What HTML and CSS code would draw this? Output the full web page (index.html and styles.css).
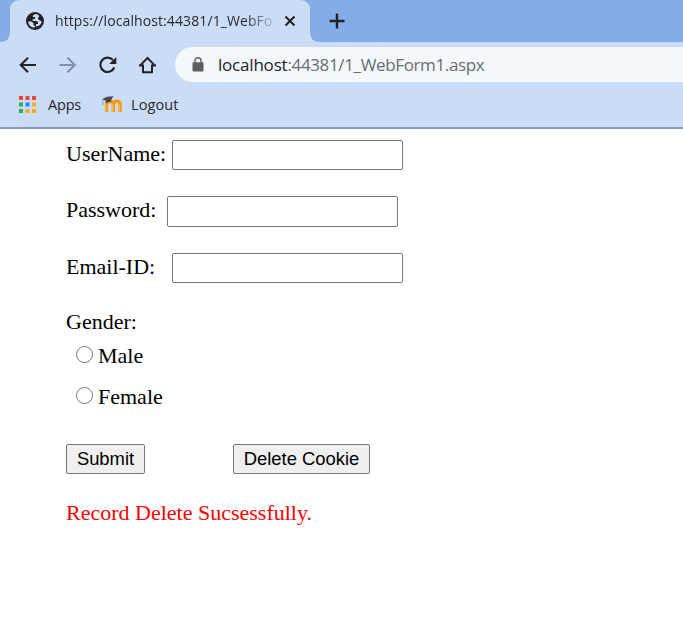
FILE: index.html
```html
<!DOCTYPE html>
<html lang="en">
<head>
<meta charset="utf-8">
<title>WebForm1</title>
<link rel="stylesheet" href="styles.css">
</head>
<body>
<header class="browser">
  <div class="tabstrip">
    <svg class="curve" width="10" height="42" viewBox="0 0 10 42"><path d="M10 32V42H0Q10 42 10 32Z" fill="#cbdcf6"/></svg>
    <div class="tab">
      <svg class="globe" width="18" height="18" viewBox="0 0 18 18"><circle cx="9" cy="9" r="9" fill="#202226"/><path d="M10.2 2.1C8 2.2 6.6 3.6 6.8 5H9V6.8L6.6 7.5V9H10.8L12 10.3V12H10V14.2L8 15.8A7 7 0 0 1 2.1 9.5H5.5L7.5 11.2V13L9.5 14.5 13 13.8A7 7 0 0 0 15.8 9.2L13.6 8.4 11.8 6.6 13.3 4A7 7 0 0 0 10.2 2.1Z" fill="#cbdcf6"/></svg>
      <span class="tab-title">https://localhost:44381/1_WebFo</span>
      <svg class="close" width="12" height="12" viewBox="0 0 12 12"><path d="M1.5 1.5L10.5 10.5M10.5 1.5L1.5 10.5" stroke="#202226" stroke-width="2"/></svg>
    </div>
    <svg class="curve" width="10" height="42" viewBox="0 0 10 42"><path d="M0 32V42H10Q0 42 0 32Z" fill="#cbdcf6"/></svg>
    <svg class="plus" width="16" height="16" viewBox="0 0 16 16"><path d="M8 .5V15.5M.5 8H15.5" stroke="#202226" stroke-width="2.4"/></svg>
  </div>
  <div class="toolbar">
    <svg class="nav" width="18" height="18" viewBox="0 0 18 18"><path d="M17 9H2M9 1.7L1.7 9 9 16.3" fill="none" stroke="#202226" stroke-width="2"/></svg>
    <svg class="nav" width="18" height="18" viewBox="0 0 18 18"><path d="M.5 9H15.5M8.5 1.7L15.8 9 8.5 16.3" fill="none" stroke="#8490a7" stroke-width="2"/></svg>
    <svg class="nav" width="18" height="18" viewBox="0 0 18 18"><path d="M15.3 11.5A7.2 7.2 0 1 1 14 4" fill="none" stroke="#202226" stroke-width="2.1"/><path d="M17.3 1V8H10.2Z" fill="#202226"/></svg>
    <svg class="nav" width="18" height="18" viewBox="0 0 18 18"><path d="M0 9.6H4V16.2H13V9.6H17M1 9.6L8.5 2 16 9.6" fill="none" stroke="#202226" stroke-width="2"/></svg>
    <div class="address">
      <svg class="lock" width="12" height="15" viewBox="0 0 12 15"><rect x=".5" y="5.2" width="11" height="9.3" rx="1.2" fill="#5b5e63"/><path d="M3 6V3.7a3 3 0 0 1 6 0V6" fill="none" stroke="#5b5e63" stroke-width="1.4"/></svg>
      <span class="host">localhost</span><span class="path">:44381/1_WebForm1.aspx</span>
    </div>
  </div>
  <div class="bookmarks">
    <div class="apps">
      <svg width="17" height="17" viewBox="0 0 17 17"><path d="M0 0h4v4H0zM6.5 0h4v4h-4zM13 0h4v4h-4z" fill="#f04438"/><path d="M0 6.5h4v4H0zM0 13h4v4H0z" fill="#31a85a"/><path d="M6.5 6.5h4v4h-4z" fill="#2489f4"/><path d="M13 6.5h4v4h-4zM6.5 13h4v4h-4zM13 13h4v4h-4z" fill="#f7ad13"/></svg>
      <span class="apps-label">Apps</span>
    </div>
    <svg class="moodle" width="20" height="17" viewBox="0 0 20 17"><path d="M4.5 16V8.5Q4.5 5.2 7.8 5.2T11.3 8.5V16M11.3 8.5Q11.3 5.2 14.8 5.2T18 8.5V16" fill="none" stroke="#f19b16" stroke-width="3.6"/><path d="M3.6 15.5V8.5M10.4 15.5V8.5M17.2 15.5V8.5" fill="none" stroke="#ffc55b" stroke-width="1"/><path d="M0 3.3L5 .8 11.5 .3 9.5 3.2 9 5.5 4 7 3.5 4.5Z" fill="#4a4b4e"/><path d="M.8 3.5V9" stroke="#858991" stroke-width=".8"/></svg>
    <span class="logout-label">Logout</span>
  </div>
</header>
<main class="page">
  <form>
    <div class="field"><label for="user">UserName:</label><input class="box" id="user" type="text"></div>
    <div class="field field-password"><label for="pass">Password:</label><input class="box" id="pass" type="password"></div>
    <div class="field"><label for="mail">Email-ID:</label><input class="box" id="mail" type="text"></div>
    <div class="legend">Gender:</div>
    <label class="option"><input class="radio" type="radio" name="gender"><span>Male</span></label>
    <label class="option"><input class="radio" type="radio" name="gender"><span>Female</span></label>
    <div class="actions"><button class="btn submit" type="button">Submit</button><button class="btn delete" type="button">Delete Cookie</button></div>
    <p class="message">Record Delete Sucsessfully.</p>
  </form>
</main>
</body>
</html>
```
FILE: styles.css
```css
* { box-sizing: border-box; }
body { margin: 0; background: #fff; color: #000; }
svg { display: block; flex: none; }
.browser { height: 129px; background: #cbdcf6; border-bottom: 2px solid #8c9bb0; font-family: "Open Sans", sans-serif; color: #26292e; }
.tabstrip { display: flex; height: 42px; background: #84ace9; }
.tab { display: flex; align-items: center; width: 300px; height: 42px; padding-left: 16px; background: #cbdcf6; border-radius: 9px 9px 0 0; }
.tab-title { width: 219px; margin-left: 11px; font-size: 14px; line-height: 20px; letter-spacing: .1px; white-space: nowrap; -webkit-mask-image: linear-gradient(90deg, #000 190px, transparent 224px); mask-image: linear-gradient(90deg, #000 190px, transparent 224px); }
.close { margin-left: 10px; }
.plus { margin: 13px 0 0 9px; }
.toolbar { display: flex; align-items: center; height: 45px; padding-left: 19px; }
.nav { margin-right: 22px; }
.nav:nth-of-type(4) { margin-right: 18px; }
.address { display: flex; align-items: center; flex: 1; height: 35px; padding-left: 17px; border-radius: 18px 0 0 18px; background: #f4f8fd; font-size: 17px; white-space: nowrap; }
.host { margin-left: 14px; color: #202226; letter-spacing: -.2px; }
.path { color: #686c72; letter-spacing: -.36px; }
.bookmarks { display: flex; align-items: center; height: 34px; font-size: 14.5px; }
.apps { display: flex; align-items: center; width: 79px; height: 34px; margin-left: 10px; padding-left: 9px; border-radius: 17px; background: #c9dbf5; }
.apps-label { margin-left: 12px; letter-spacing: -.2px; }
.moodle { margin-left: 13px; }
.logout-label { margin-left: 9px; letter-spacing: .1px; }
.page { padding: 11px 0 0 66px; font: 22px/25px "Liberation Serif", serif; }
.field { display: flex; height: 30px; margin-bottom: 26px; }
.field label { width: 106px; padding-top: 1px; }
.field-password { height: 31px; }
.field-password label { width: 101px; }
.box { width: 231px; height: 100%; margin: 0; border: 1px solid #767676; border-radius: 2px; background: #fff; font: 18.67px "Liberation Sans", sans-serif; outline: 0; }
.legend { height: 34px; }
.option { display: flex; width: 130px; height: 41px; padding-left: 10px; }
.option span { margin-left: 5px; }
.radio { width: 17px; height: 17px; margin: 3px 0 0; appearance: none; border: 1px solid #767676; border-radius: 50%; background: #fff; }
.actions { display: flex; height: 30px; margin-top: 19px; }
.btn { height: 30px; margin: 0; padding: 0; border: 1px solid #767676; border-radius: 2px; background: #efefef; color: #000; font: 18.4px "Liberation Sans", sans-serif; }
.submit { width: 79px; }
.delete { width: 137px; margin-left: 88px; }
.message { margin: 26px 0 0; color: #f00; }
```
